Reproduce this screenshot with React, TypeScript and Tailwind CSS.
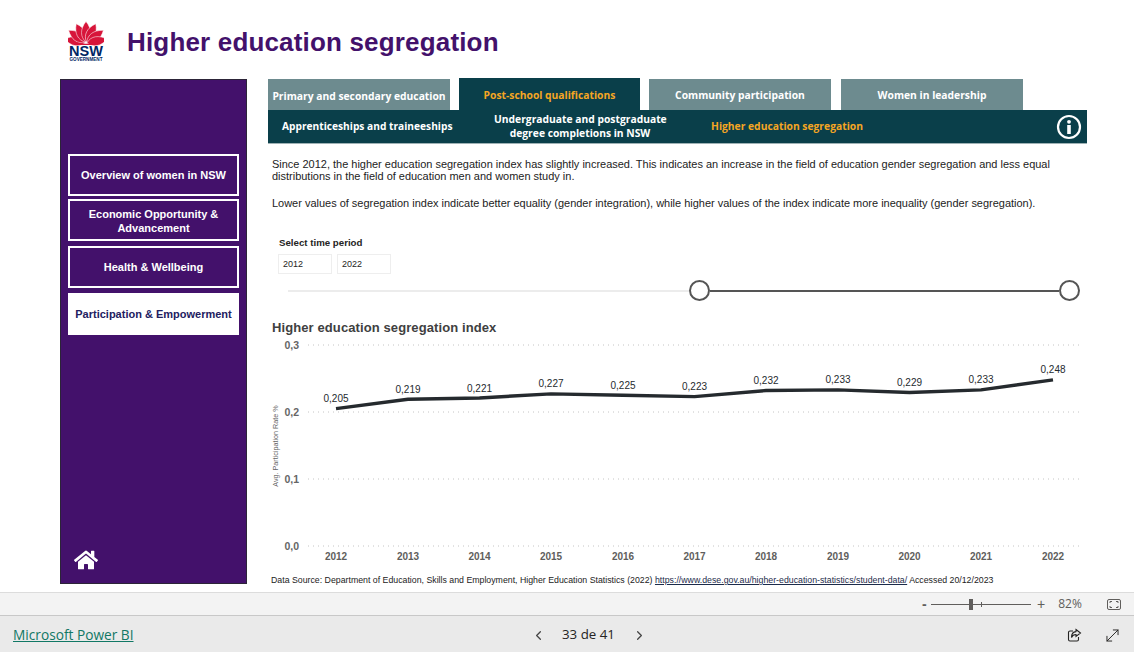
import { ChevronLeft, ChevronRight, MoveDiagonal } from 'lucide-react';
import { FaHome } from 'react-icons/fa';

const tabs = [
	{ label: 'Primary and secondary education', active: false, className: 'w-[182px] pt-[4px]' },
	{ label: 'Post-school qualifications', active: true, className: 'ml-[9px] w-[181px] pt-[3px]' },
	{ label: 'Community participation', active: false, className: 'ml-[9px] w-[182px] pt-[2px]' },
	{ label: 'Women in leadership', active: false, className: 'ml-[10px] w-[182px] pt-[2px]' },
];

const points = [
	{ year: 2012, x: 336, value: 0.205, labelY: 402 },
	{ year: 2013, x: 408, value: 0.219, labelY: 393 },
	{ year: 2014, x: 479.5, value: 0.221, labelY: 392 },
	{ year: 2015, x: 551, value: 0.227, labelY: 387 },
	{ year: 2016, x: 623, value: 0.225, labelY: 389 },
	{ year: 2017, x: 694.5, value: 0.223, labelY: 390 },
	{ year: 2018, x: 766, value: 0.232, labelY: 384 },
	{ year: 2019, x: 838, value: 0.233, labelY: 383 },
	{ year: 2020, x: 909.5, value: 0.229, labelY: 386 },
	{ year: 2021, x: 981, value: 0.233, labelY: 383 },
	{ year: 2022, x: 1053, value: 0.248, labelY: 373 },
];

const gridLines = [
	{ label: '0,3', y: 345 },
	{ label: '0,2', y: 412 },
	{ label: '0,1', y: 479 },
	{ label: '0,0', y: 546 },
];

function NswLogo() {
	const angles = [-80, -54, -27, 0, 27, 54, 80];
	return (
		<svg width="36" height="42" viewBox="1 1 36 42" className="shrink-0">
			{angles.map((angle) => (
				<path
					key={angle}
					d="M19 22 C13 17 13 9 19 1.5 C25 9 25 17 19 22 Z"
					fill="#d7153a"
					stroke="#fff"
					strokeWidth="0.5"
					transform={`rotate(${angle} 19 23)`}
				/>
			))}
			<path d="M6 20 C12 25 26 25 32 20 L28 25 L10 25 Z" fill="#d7153a" />
			<text
				x="19"
				y="36"
				textAnchor="middle"
				fill="#002664"
				fontSize="14.5"
				fontWeight="700"
				fontFamily="Liberation Sans, sans-serif"
			>
				NSW
			</text>
			<text
				x="19"
				y="41"
				textAnchor="middle"
				fill="#002664"
				fontSize="4.6"
				fontWeight="700"
				fontFamily="Liberation Sans, sans-serif"
			>
				GOVERNMENT
			</text>
		</svg>
	);
}

function SideButton({ label, selected, className }: { label: string; selected?: boolean; className: string }) {
	return (
		<div
			className={`flex h-[42px] w-[171px] items-center justify-center border-2 border-white px-1 text-center text-[11px] leading-[14px] font-bold ${
				selected ? 'bg-white text-[#22205f]' : 'bg-[#43116b] text-white'
			} ${className}`}
		>
			{label}
		</div>
	);
}

function Chart() {
	const linePoints = points.map((p) => `${p.x},${546 - p.value * 670}`).join(' ');
	return (
		<svg width="819" height="233" viewBox="268 337 819 233" className="block">
			{gridLines.map((g) => (
				<g key={g.label}>
					<line x1="308" x2="1080" y1={g.y} y2={g.y} stroke="#c4c4c4" strokeWidth="1" strokeDasharray="1 4" />
					<text x="299" y={g.y + 4} textAnchor="end" fontSize="10.5" fill="#666" fontWeight="700" fontFamily="Liberation Sans, sans-serif">
						{g.label}
					</text>
				</g>
			))}
			<text
				transform="translate(278 446) rotate(-90)"
				textAnchor="middle"
				fontSize="7.2"
				fill="#666"
				fontFamily="Liberation Sans, sans-serif"
			>
				Avg. Participation Rate %
			</text>
			<polyline points={linePoints} fill="none" stroke="#252a2e" strokeWidth="3.4" strokeLinejoin="round" />
			{points.map((p) => (
				<g key={p.year} fontFamily="Liberation Sans, sans-serif">
					<text x={p.x} y={p.labelY} textAnchor="middle" fontSize="10" fill="#252a2e">
						{p.value.toFixed(3).replace('.', ',')}
					</text>
					<text x={p.x} y="560" textAnchor="middle" fontSize="10" fontWeight="700" fill="#605e5c">
						{p.year}
					</text>
				</g>
			))}
		</svg>
	);
}

export default function App() {
	return (
		<div className="flex h-[652px] w-[1134px] flex-col overflow-hidden bg-white font-['Liberation_Sans',sans-serif]">
			<div className="h-[592px] shrink-0">
				<header className="flex h-[78px] items-center pt-[6px] pl-[68px]">
					<NswLogo />
					<h1 className="ml-[23px] text-[26px] leading-none font-bold tracking-[0.17px] text-[#43116b]">
						Higher education segregation
					</h1>
				</header>
				<div className="flex pl-[60px]">
					<aside className="mt-px flex h-[505px] w-[187px] flex-col border border-[#2c2438] bg-[#43116b] pt-[74px] pl-[7px]">
						<SideButton label="Overview of women in NSW" className="" />
						<SideButton label="Economic Opportunity & Advancement" className="mt-[3px] pt-px" />
						<SideButton label="Health & Wellbeing" className="mt-[5px]" />
						<SideButton label="Participation & Empowerment" selected className="mt-[5px] text-[10.5px]" />
						<FaHome className="mt-auto mb-[11px] ml-[6px] text-white" size={24} />
					</aside>
					<main className="ml-[21px] w-[819px]">
						<nav className="flex h-[32px] items-end font-['Open_Sans',sans-serif] text-[10.3px] font-bold whitespace-nowrap">
							{tabs.map((tab) => (
								<div
									key={tab.label}
									className={`flex items-center justify-center ${tab.className} ${
										tab.active ? 'h-[32px] bg-[#0a3f4a] text-[#f5a623]' : 'h-[31px] bg-[#6d8b8f] text-white'
									}`}
								>
									{tab.label}
								</div>
							))}
						</nav>
						<div className="flex h-[34px] items-center border-b border-[#9fb2b5] bg-[#0a3f4a] pb-[2px] font-['Open_Sans',sans-serif] text-[10.3px] leading-[14px] font-bold whitespace-nowrap text-white">
							<div className="w-[226px] pl-[14px] text-[10.2px]">Apprenticeships and traineeships</div>
							<div className="w-[172px] text-center">
								Undergraduate and postgraduate
								<br />
								degree completions in NSW
							</div>
							<div className="ml-[45px] text-[#f5a623]">Higher education segregation</div>
							<svg width="26" height="26" viewBox="0 0 26 26" className="mt-[2px] mr-[5px] ml-auto">
								<circle cx="13" cy="13" r="11" fill="none" stroke="#fff" strokeWidth="2.2" />
								<circle cx="13" cy="7.8" r="1.9" fill="#fff" />
								<rect x="11.2" y="11" width="3.6" height="9" fill="#fff" />
							</svg>
						</div>
						<div className="mt-[14px] pl-[4px] text-[10.97px] leading-[12px] text-[#222]">
							<p>
								Since 2012, the higher education segregation index has slightly increased. This indicates an increase in the
								field of education gender segregation and less equal
								<br />
								distributions in the field of education men and women study in.
							</p>
							<p className="mt-[15px]">
								Lower values of segregation index indicate better equality (gender integration), while higher values of the
								index indicate more inequality (gender segregation).
							</p>
						</div>
						<div className="mt-[28px] pl-[11px] text-[9.7px] leading-[12px] font-bold text-[#252423]">Select time period</div>
						<div className="mt-[5px] flex gap-[5px] pl-[10px] text-[9px] text-[#252423]">
							<div className="flex h-[20px] w-[54px] items-center border border-[#eeeeee] pt-[2px] pl-[4px]">2012</div>
							<div className="flex h-[20px] w-[54px] items-center border border-[#eeeeee] pt-[2px] pl-[4px]">2022</div>
						</div>
						<div className="mt-[6px] flex items-center pl-[20px]">
							<div className="h-[2px] w-[401px] bg-[#ececec]" />
							<div className="h-[21px] w-[21px] rounded-full border-2 border-[#555] bg-white" />
							<div className="h-[2px] w-[349px] bg-[#555]" />
							<div className="h-[21px] w-[21px] rounded-full border-2 border-[#555] bg-white" />
						</div>
						<h2 className="mt-[19px] pl-[4px] text-[13px] leading-[16px] font-bold tracking-[0.1px] text-[#404040]">
							Higher education segregation index
						</h2>
						<div className="mt-px">
							<Chart />
						</div>
						<p className="mt-[4px] pl-[3px] text-[8.77px] leading-[12px] text-[#222]">
							Data Source: Department of Education, Skills and Employment, Higher Education Statistics (2022){' '}
							<span className="text-[#1c2b4a] underline">https://www.dese.gov.au/higher-education-statistics/student-data/</span>{' '}
							Accessed 20/12/2023
						</p>
					</main>
				</div>
			</div>
			<div className="flex h-[23px] shrink-0 items-center border-t border-[#dcdcdc] bg-[#f3f3f3] text-[#605e5c]">
				<span className="ml-[922px] w-[9px] text-[14px] leading-none font-bold">-</span>
				<div className="relative h-px w-[100px] bg-[#605e5c]">
					<div className="absolute top-[-5px] left-[38px] h-[11px] w-[4px] bg-[#605e5c]" />
					<div className="absolute top-[-2px] left-[50px] h-[5px] w-px bg-[#605e5c]" />
				</div>
				<span className="ml-[6px] text-[14px] leading-none">+</span>
				<span className="ml-[13px] font-['Open_Sans',sans-serif] text-[12px]">82%</span>
				<svg width="14" height="11" viewBox="0 0 14 11" className="ml-[25px]" fill="none" stroke="#605e5c">
					<rect x="0.5" y="0.5" width="13" height="10" rx="1.5" />
					<path d="M3 4V2.5H5M9 2.5H11V4M11 7V8.5H9M5 8.5H3V7" />
				</svg>
			</div>
			<footer className="flex h-[37px] shrink-0 items-center border-t border-[#c8c8c8] bg-[#eaeaea] pt-[2px] text-[#252423]">
				<span className="ml-[13px] w-[120px] font-['Open_Sans',sans-serif] text-[13.7px] whitespace-nowrap text-[#117865] underline">
					Microsoft Power BI
				</span>
				<ChevronLeft className="ml-[398px] text-[#444]" size={15} />
				<span className="ml-[16px] w-[53px] font-['Open_Sans',sans-serif] text-[13.3px] font-medium whitespace-nowrap">33 de 41</span>
				<ChevronRight className="ml-[17px] text-[#444]" size={15} />
				<svg width="15" height="15" viewBox="0 0 15 15" className="ml-[420px]" fill="none" stroke="#252423" strokeWidth="1.1">
					<path d="M6 3H3a1.5 1.5 0 0 0-1.5 1.5v7A1.5 1.5 0 0 0 3 13h7a1.5 1.5 0 0 0 1.5-1.5V9" />
					<path d="M9 1.5l4.5 3.5L9 8.5V6.5C6.8 6.5 5.4 7.4 4.5 9.5 4.5 6.3 6.2 3.8 9 3.6Z" />
				</svg>
				<MoveDiagonal className="ml-[21px] text-[#252423]" size={19} strokeWidth={1.2} />
			</footer>
		</div>
	);
}
